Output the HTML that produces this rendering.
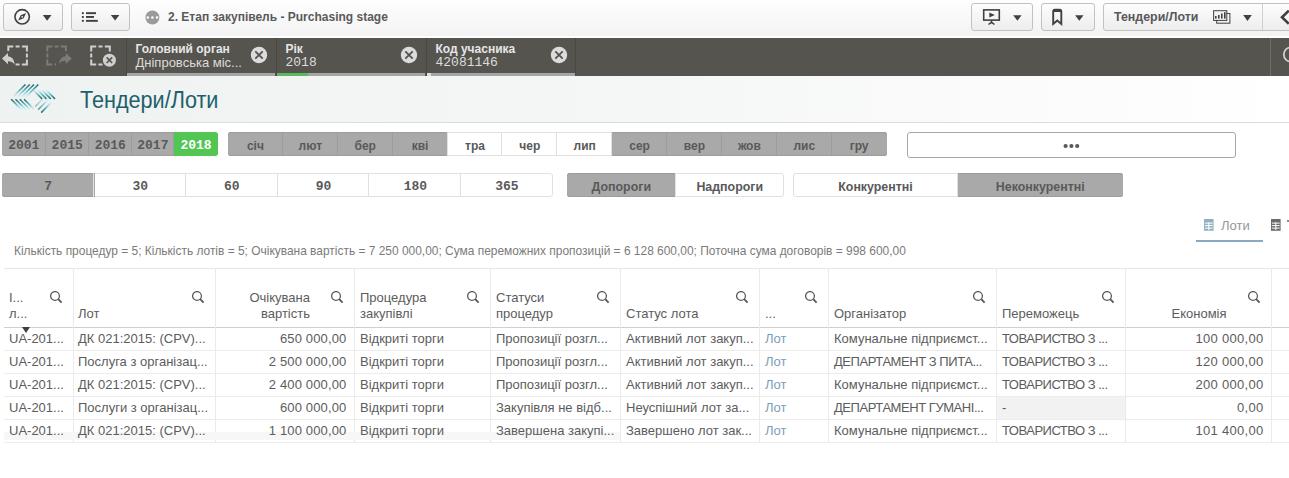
<!DOCTYPE html>
<html><head><meta charset="utf-8">
<style>
*{margin:0;padding:0;box-sizing:border-box}
html,body{width:1289px;height:478px;overflow:hidden;background:#fff;font-family:"Liberation Sans",sans-serif;position:relative}
.a{position:absolute}
.btn{position:absolute;top:3px;height:28px;border:1px solid #c2c2c2;border-radius:3px;background:linear-gradient(#fdfdfd,#ededed)}
#topbar{position:absolute;left:0;top:0;width:1289px;height:38px;background:linear-gradient(#fefefe,#f3f3f3 96%,#fff 96%)}
#selbar{position:absolute;left:0;top:38px;width:1289px;height:38px;background:#56544f}
.tab{position:absolute;top:0;height:38px;border-left:1px solid #4a4744}
.tab .t1{position:absolute;left:8.5px;top:4px;font-weight:bold;font-size:12px;color:#e6e6e6;white-space:nowrap}
.tab .t2{position:absolute;left:8.5px;top:17px;font-size:13px;color:#dcdcdc;white-space:nowrap}
.tab .bar{position:absolute;left:0;bottom:0;height:3px;background:#a5a5a5}
.xc{position:absolute;top:8px}
#head{position:absolute;left:0;top:76px;width:1289px;height:47px;background:linear-gradient(90deg,#eef2f0,#f5f7f6 50%,#fcfcfc 85%,#fff);border-bottom:1px solid #dcdcdc}
.c{position:absolute;display:flex;align-items:center;justify-content:center;font-weight:bold;color:#595959;white-space:nowrap}
.tx{position:absolute;font-size:13px;color:#5c5c5c;white-space:nowrap;line-height:16px}
.mono{font-family:"Liberation Mono",monospace}
</style></head><body>
<div id="topbar">
<div class="btn" style="left:3px;width:60px"></div>
<div class="btn" style="left:71px;width:59px"></div>
<div class="btn" style="left:971px;width:62px"></div>
<div class="btn" style="left:1041px;width:54px"></div>
<div class="btn" style="left:1103px;width:200px"></div>
<div class="a" style="left:1262px;top:4px;width:1px;height:26px;background:#cfcfcf"></div>
<div class="a" style="left:168px;top:10px;font-size:12px;font-weight:bold;color:#595959;white-space:nowrap">2. Етап закупівель - Purchasing stage</div>
<div class="a" style="left:1114px;top:10px;font-size:12.4px;font-weight:bold;color:#595959;white-space:nowrap">Тендери/Лоти</div>
</div>
<div id="selbar">
<div class="tab" style="left:126px;width:150px"><div class="t1">Головний орган</div><div class="t2">Дніпровська міс...</div><div class="bar" style="width:148px"></div><svg class="xc" style="left:123px" width="18" height="18" viewBox="0 0 18 18"><circle cx="9" cy="9" r="8.2" fill="#dcdcdc"/><path d="M5.3 5.3 L12.7 12.7 M12.7 5.3 L5.3 12.7" stroke="#56544f" stroke-width="1.8"/></svg></div>
<div class="tab" style="left:276px;width:150px"><div class="t1">Рік</div><div class="t2 mono">2018</div><div class="bar" style="width:148px"></div><div class="bar" style="width:31px;background:#5cb85c"></div><svg class="xc" style="left:123px" width="18" height="18" viewBox="0 0 18 18"><circle cx="9" cy="9" r="8.2" fill="#dcdcdc"/><path d="M5.3 5.3 L12.7 12.7 M12.7 5.3 L5.3 12.7" stroke="#56544f" stroke-width="1.8"/></svg></div>
<div class="tab" style="left:426px;width:150px;border-right:1px solid #4a4744"><div class="t1">Код учасника</div><div class="t2 mono">42081146</div><div class="bar" style="width:148px"></div><div class="bar" style="width:4px;background:#e0e0e0"></div><svg class="xc" style="left:123px" width="18" height="18" viewBox="0 0 18 18"><circle cx="9" cy="9" r="8.2" fill="#dcdcdc"/><path d="M5.3 5.3 L12.7 12.7 M12.7 5.3 L5.3 12.7" stroke="#56544f" stroke-width="1.8"/></svg></div>
<div class="a" style="left:1270px;top:0;width:1px;height:38px;background:#6f6d69"></div>
<svg class="a" style="left:1271px;top:0" width="18" height="38"><circle cx="20" cy="16.5" r="7.2" fill="none" stroke="#cfcfcf" stroke-width="1.8"/></svg>
</div>
<svg class="a" style="left:0;top:0" width="170" height="38" viewBox="0 0 170 38"><circle cx="22.15" cy="16.8" r="7.2" fill="none" stroke="#404040" stroke-width="1.6"/><path d="M26.1 13.1 L23.6 18.2 L18.2 20.4 L20.7 15.3 Z" fill="#404040"/><circle cx="22.2" cy="16.8" r="0.9" fill="#f4f4f4"/><path d="M42.8 14.9 L51.5 14.9 L47.15 20.7 Z" fill="#404040"/><rect x="81.9" y="12.2" width="1.9" height="1.9" fill="#404040"/><rect x="81.9" y="16" width="1.9" height="1.9" fill="#404040"/><rect x="81.9" y="19.9" width="1.9" height="1.9" fill="#404040"/><rect x="86" y="12.2" width="10" height="1.9" fill="#404040"/><rect x="86" y="16" width="8" height="1.9" fill="#404040"/><rect x="86" y="19.9" width="11.8" height="1.9" fill="#404040"/><path d="M110.8 14.9 L119.4 14.9 L115.1 20.5 Z" fill="#404040"/><circle cx="152.4" cy="17.5" r="7" fill="#9b9b9b"/><circle cx="147.8" cy="17.4" r="1.25" fill="#fff"/><circle cx="152.4" cy="17.4" r="1.25" fill="#fff"/><circle cx="157" cy="17.4" r="1.25" fill="#fff"/></svg>
<svg class="a" style="left:960px;top:0" width="329" height="38" viewBox="960 0 329 38"><rect x="983.7" y="9.9" width="15.6" height="10.2" fill="none" stroke="#404040" stroke-width="1.6"/><path d="M989.3 12.6 L994.8 15 L989.3 17.4 Z" fill="#404040"/><path d="M991.5 20.5 V22.5 M988.5 24.5 L991.5 22.3 L994.5 24.5" fill="none" stroke="#404040" stroke-width="1.5"/><path d="M1013.2 15.2 L1021.6 15.2 L1017.4 20.8 Z" fill="#404040"/><path d="M1053.2 23.9 V11.5 Q1053.2 9.6 1055 9.6 H1059.5 Q1061.3 9.6 1061.3 11.5 V23.9 L1057.25 20.5 Z" fill="none" stroke="#404040" stroke-width="1.9" stroke-linejoin="miter"/><rect x="1053" y="9.4" width="8.5" height="2.6" rx="1" fill="#404040"/><path d="M1075.1 15.2 L1083.5 15.2 L1079.3 20.8 Z" fill="#404040"/><rect x="1216.7" y="13.5" width="13.2" height="9.7" fill="none" stroke="#404040" stroke-width="1"/><rect x="1213.6" y="10.7" width="13.2" height="9.7" fill="#f2f2f2" stroke="#404040" stroke-width="1"/><rect x="1215" y="16" width="1.6" height="2.6" fill="#404040"/><rect x="1218" y="15" width="1.6" height="3.6" fill="#404040"/><rect x="1221" y="13.5" width="1.6" height="5.1" fill="#404040"/><rect x="1224" y="12.2" width="1.6" height="6.4" fill="#404040"/><path d="M1243.2 15 L1251.8 15 L1247.5 20.9 Z" fill="#404040"/><path d="M1288.8 10.6 L1282 17.2 L1288.8 23.8" fill="none" stroke="#404040" stroke-width="2.6"/></svg>
<svg class="a" style="left:0;top:0" width="126" height="75" viewBox="0 0 126 75"><path d="M8.3 51.6 V46.6 H13.3 M21.9 46.6 H26.9 V51.6 M26.9 59.6 V64.6 H21.9 M13.3 64.6 H8.3 V59.6 M15.6 46.6 H19.6 M26.9 53.6 V57.6 M15.6 64.6 H19.6 M8.3 53.6 V57.6" fill="none" stroke="#cfcfcf" stroke-width="2"/><path d="M47.3 51.6 V46.6 H52.3 M60.9 46.6 H65.9 V51.6 M65.9 59.6 V64.6 H60.9 M52.3 64.6 H47.3 V59.6 M54.6 46.6 H58.6 M65.9 53.6 V57.6 M54.6 64.6 H58.6 M47.3 53.6 V57.6" fill="none" stroke="#7d7b78" stroke-width="2"/><path d="M91.2 51.6 V46.6 H96.2 M104.8 46.6 H109.8 V51.6 M109.8 59.6 V64.6 H104.8 M96.2 64.6 H91.2 V59.6 M98.5 46.6 H102.5 M109.8 53.6 V57.6 M98.5 64.6 H102.5 M91.2 53.6 V57.6" fill="none" stroke="#cfcfcf" stroke-width="2"/><rect x="6" y="51" width="9" height="15" fill="#575451"/><path d="M2 58.6 L8 53 V56.3 Q13.8 56.6 14.8 64.8 Q12.5 61 8 61.2 V64.3 Z" fill="#cfcfcf"/><rect x="56" y="51" width="14" height="15" fill="#575451"/><path d="M71.8 58.4 L65.8 53 V56.2 Q60 56.5 59 63.7 Q61.3 60.3 65.8 60.7 V63.8 Z" fill="#7d7b78"/><circle cx="109.4" cy="60.2" r="7.7" fill="#575451"/><circle cx="109.4" cy="60.2" r="6.5" fill="#cfcfcf"/><path d="M106.6 57.4 L112.2 63 M112.2 57.4 L106.6 63" stroke="#575451" stroke-width="1.6"/></svg>
<div id="head"><svg class="a" style="left:0;top:0" width="70" height="47" viewBox="0 76 70 47"><defs><linearGradient id="gUL" x1="1" y1="0" x2="0" y2="1"><stop offset="0" stop-color="#1f636d"/><stop offset="0.55" stop-color="#6fc3d0"/><stop offset="1" stop-color="#bfeaf0" stop-opacity="0.3"/></linearGradient><linearGradient id="gLL" x1="0" y1="0" x2="1" y2="1"><stop offset="0" stop-color="#1f636d"/><stop offset="0.55" stop-color="#6fc3d0"/><stop offset="1" stop-color="#bfeaf0" stop-opacity="0.3"/></linearGradient><linearGradient id="gUR" x1="1" y1="1" x2="0" y2="0"><stop offset="0" stop-color="#1f636d"/><stop offset="0.55" stop-color="#6fc3d0"/><stop offset="1" stop-color="#bfeaf0" stop-opacity="0.3"/></linearGradient><linearGradient id="gLR" x1="0" y1="1" x2="1" y2="0"><stop offset="0" stop-color="#1f636d"/><stop offset="0.55" stop-color="#6fc3d0"/><stop offset="1" stop-color="#bfeaf0" stop-opacity="0.3"/></linearGradient></defs><path d="M25.4 84.5 L12.8 97.1" stroke="url(#gUL)" stroke-width="1.5" fill="none"/><path d="M11.2 99.3 L21.5 109.6" stroke="url(#gLL)" stroke-width="1.5" fill="none"/><path d="M55.0 98.9 L46.0 89.9" stroke="url(#gUR)" stroke-width="1.5" fill="none"/><path d="M29.7 84.5 L17.1 97.1" stroke="url(#gUL)" stroke-width="1.5" fill="none"/><path d="M15.5 99.3 L25.8 109.6" stroke="url(#gLL)" stroke-width="1.5" fill="none"/><path d="M50.7 98.9 L41.7 89.9" stroke="url(#gUR)" stroke-width="1.5" fill="none"/><path d="M34.0 84.5 L21.4 97.1" stroke="url(#gUL)" stroke-width="1.5" fill="none"/><path d="M19.8 99.3 L30.1 109.6" stroke="url(#gLL)" stroke-width="1.5" fill="none"/><path d="M46.4 98.9 L37.4 89.9" stroke="url(#gUR)" stroke-width="1.5" fill="none"/><path d="M38.3 84.5 L25.7 97.1" stroke="url(#gUL)" stroke-width="1.5" fill="none"/><path d="M24.1 99.3 L34.4 109.6" stroke="url(#gLL)" stroke-width="1.5" fill="none"/><path d="M42.1 98.9 L33.1 89.9" stroke="url(#gUR)" stroke-width="1.5" fill="none"/><path d="M41.2 112.6 L51.5 102.3" stroke="url(#gLR)" stroke-width="1.5" fill="none" opacity="1.00"/><path d="M38.2 109.6 L48.5 99.3" stroke="url(#gLR)" stroke-width="1.5" fill="none" opacity="0.70"/><path d="M35.2 106.6 L45.5 96.3" stroke="url(#gLR)" stroke-width="1.5" fill="none" opacity="0.40"/></svg><div class="a" style="left:80px;top:10.5px;font-size:23px;color:#20606c;white-space:nowrap;transform:scaleX(0.94);transform-origin:0 0">Тендери/Лоти</div></div>
<div class="a" style="left:2px;top:132px;width:216.0px;height:24px;border:1px solid #e1e1e1;border-radius:3px;background:#fff"></div>
<div class="c" style="left:2.00px;top:132px;width:43.60px;height:24px;background:#a9a9a9;box-shadow:inset 0 1px #9c9c9c,inset 0 -1px #9c9c9c;border-radius:3px 0px 0px 3px;font-size:13px;color:#595959;font-family:'Liberation Mono',monospace;padding-top:2px">2001</div>
<div class="c" style="left:45.60px;top:132px;width:43.20px;height:24px;background:#a9a9a9;box-shadow:inset 0 1px #9c9c9c,inset 0 -1px #9c9c9c;border-radius:0px 0px 0px 0px;font-size:13px;color:#595959;font-family:'Liberation Mono',monospace;padding-top:2px">2015</div>
<div class="c" style="left:88.80px;top:132px;width:42.90px;height:24px;background:#a9a9a9;box-shadow:inset 0 1px #9c9c9c,inset 0 -1px #9c9c9c;border-radius:0px 0px 0px 0px;font-size:13px;color:#595959;font-family:'Liberation Mono',monospace;padding-top:2px">2016</div>
<div class="c" style="left:131.70px;top:132px;width:42.40px;height:24px;background:#a9a9a9;box-shadow:inset 0 1px #9c9c9c,inset 0 -1px #9c9c9c;border-radius:0px 0px 0px 0px;font-size:13px;color:#595959;font-family:'Liberation Mono',monospace;padding-top:2px">2017</div>
<div class="c" style="left:174.10px;top:132px;width:43.90px;height:24px;background:#52c552;border-radius:0px 3px 3px 0px;font-size:13px;color:#fff;font-family:'Liberation Mono',monospace;padding-top:2px">2018</div>
<div class="a" style="left:45px;top:132px;width:1px;height:24px;background:#9c9c9c"></div>
<div class="a" style="left:88px;top:132px;width:1px;height:24px;background:#9c9c9c"></div>
<div class="a" style="left:131px;top:132px;width:1px;height:24px;background:#9c9c9c"></div>
<div class="a" style="left:173px;top:132px;width:1px;height:24px;background:#9c9c9c"></div>
<div class="a" style="left:228px;top:132px;width:658.5600000000001px;height:24px;border:1px solid #e1e1e1;border-radius:3px;background:#fff"></div>
<div class="c" style="left:228.00px;top:132px;width:54.88px;height:24px;background:#a9a9a9;box-shadow:inset 0 1px #9c9c9c,inset 0 -1px #9c9c9c;border-radius:3px 0px 0px 3px;font-size:12px;color:#595959;padding-top:3px">січ</div>
<div class="c" style="left:282.88px;top:132px;width:54.88px;height:24px;background:#a9a9a9;box-shadow:inset 0 1px #9c9c9c,inset 0 -1px #9c9c9c;border-radius:0px 0px 0px 0px;font-size:12px;color:#595959;padding-top:3px">лют</div>
<div class="c" style="left:337.76px;top:132px;width:54.88px;height:24px;background:#a9a9a9;box-shadow:inset 0 1px #9c9c9c,inset 0 -1px #9c9c9c;border-radius:0px 0px 0px 0px;font-size:12px;color:#595959;padding-top:3px">бер</div>
<div class="c" style="left:392.64px;top:132px;width:54.88px;height:24px;background:#a9a9a9;box-shadow:inset 0 1px #9c9c9c,inset 0 -1px #9c9c9c;border-radius:0px 0px 0px 0px;font-size:12px;color:#595959;padding-top:3px">кві</div>
<div class="c" style="left:447.52px;top:132px;width:54.88px;height:24px;border-radius:0px 0px 0px 0px;font-size:12px;color:#595959;padding-top:3px">тра</div>
<div class="c" style="left:502.40px;top:132px;width:54.88px;height:24px;border-radius:0px 0px 0px 0px;font-size:12px;color:#595959;padding-top:3px">чер</div>
<div class="c" style="left:557.28px;top:132px;width:54.88px;height:24px;border-radius:0px 0px 0px 0px;font-size:12px;color:#595959;padding-top:3px">лип</div>
<div class="c" style="left:612.16px;top:132px;width:54.88px;height:24px;background:#a9a9a9;box-shadow:inset 0 1px #9c9c9c,inset 0 -1px #9c9c9c;border-radius:0px 0px 0px 0px;font-size:12px;color:#595959;padding-top:3px">сер</div>
<div class="c" style="left:667.04px;top:132px;width:54.88px;height:24px;background:#a9a9a9;box-shadow:inset 0 1px #9c9c9c,inset 0 -1px #9c9c9c;border-radius:0px 0px 0px 0px;font-size:12px;color:#595959;padding-top:3px">вер</div>
<div class="c" style="left:721.92px;top:132px;width:54.88px;height:24px;background:#a9a9a9;box-shadow:inset 0 1px #9c9c9c,inset 0 -1px #9c9c9c;border-radius:0px 0px 0px 0px;font-size:12px;color:#595959;padding-top:3px">жов</div>
<div class="c" style="left:776.80px;top:132px;width:54.88px;height:24px;background:#a9a9a9;box-shadow:inset 0 1px #9c9c9c,inset 0 -1px #9c9c9c;border-radius:0px 0px 0px 0px;font-size:12px;color:#595959;padding-top:3px">лис</div>
<div class="c" style="left:831.68px;top:132px;width:54.88px;height:24px;background:#a9a9a9;box-shadow:inset 0 1px #9c9c9c,inset 0 -1px #9c9c9c;border-radius:0px 3px 3px 0px;font-size:12px;color:#595959;padding-top:3px">гру</div>
<div class="a" style="left:282px;top:132px;width:1px;height:24px;background:#9c9c9c"></div>
<div class="a" style="left:337px;top:132px;width:1px;height:24px;background:#9c9c9c"></div>
<div class="a" style="left:392px;top:132px;width:1px;height:24px;background:#9c9c9c"></div>
<div class="a" style="left:447px;top:132px;width:1px;height:24px;background:#e1e1e1"></div>
<div class="a" style="left:501px;top:132px;width:1px;height:24px;background:#e1e1e1"></div>
<div class="a" style="left:556px;top:132px;width:1px;height:24px;background:#e1e1e1"></div>
<div class="a" style="left:611px;top:132px;width:1px;height:24px;background:#e1e1e1"></div>
<div class="a" style="left:666px;top:132px;width:1px;height:24px;background:#9c9c9c"></div>
<div class="a" style="left:721px;top:132px;width:1px;height:24px;background:#9c9c9c"></div>
<div class="a" style="left:776px;top:132px;width:1px;height:24px;background:#9c9c9c"></div>
<div class="a" style="left:831px;top:132px;width:1px;height:24px;background:#9c9c9c"></div>
<div class="a" style="left:907px;top:132px;width:329px;height:26px;border:1px solid #a8a8a8;border-radius:3px;background:#fff"></div>
<svg class="a" style="left:1060px;top:141px" width="24" height="10"><circle cx="5.6" cy="5" r="2.1" fill="#595959"/><circle cx="11.4" cy="5" r="2.1" fill="#595959"/><circle cx="17.2" cy="5" r="2.1" fill="#595959"/></svg>
<div class="a" style="left:2px;top:173px;width:550.5px;height:24px;border:1px solid #e1e1e1;border-radius:3px;background:#fff"></div>
<div class="c" style="left:2.00px;top:173px;width:92.50px;height:24px;background:#a9a9a9;box-shadow:inset 0 1px #9c9c9c,inset 0 -1px #9c9c9c;border-radius:3px 0px 0px 3px;font-size:13px;color:#595959;font-family:'Liberation Mono',monospace;padding-top:2px">7</div>
<div class="c" style="left:94.50px;top:173px;width:91.60px;height:24px;border-radius:0px 0px 0px 0px;font-size:13px;color:#595959;font-family:'Liberation Mono',monospace;padding-top:2px">30</div>
<div class="c" style="left:186.10px;top:173px;width:91.50px;height:24px;border-radius:0px 0px 0px 0px;font-size:13px;color:#595959;font-family:'Liberation Mono',monospace;padding-top:2px">60</div>
<div class="c" style="left:277.60px;top:173px;width:91.80px;height:24px;border-radius:0px 0px 0px 0px;font-size:13px;color:#595959;font-family:'Liberation Mono',monospace;padding-top:2px">90</div>
<div class="c" style="left:369.40px;top:173px;width:91.90px;height:24px;border-radius:0px 0px 0px 0px;font-size:13px;color:#595959;font-family:'Liberation Mono',monospace;padding-top:2px">180</div>
<div class="c" style="left:461.30px;top:173px;width:91.20px;height:24px;border-radius:0px 3px 3px 0px;font-size:13px;color:#595959;font-family:'Liberation Mono',monospace;padding-top:2px">365</div>
<div class="a" style="left:93px;top:173px;width:1px;height:24px;background:#e1e1e1"></div>
<div class="a" style="left:185px;top:173px;width:1px;height:24px;background:#e1e1e1"></div>
<div class="a" style="left:277px;top:173px;width:1px;height:24px;background:#e1e1e1"></div>
<div class="a" style="left:368px;top:173px;width:1px;height:24px;background:#e1e1e1"></div>
<div class="a" style="left:460px;top:173px;width:1px;height:24px;background:#e1e1e1"></div>
<div class="a" style="left:567px;top:173px;width:217.0px;height:24px;border:1px solid #e1e1e1;border-radius:3px;background:#fff"></div>
<div class="c" style="left:567.00px;top:173px;width:108.50px;height:24px;background:#a9a9a9;box-shadow:inset 0 1px #9c9c9c,inset 0 -1px #9c9c9c;border-radius:3px 0px 0px 3px;font-size:12.4px;color:#595959;padding-top:3px">Допороги</div>
<div class="c" style="left:675.50px;top:173px;width:108.50px;height:24px;border-radius:0px 3px 3px 0px;font-size:12.4px;color:#595959;padding-top:3px">Надпороги</div>
<div class="a" style="left:675px;top:173px;width:1px;height:24px;background:#e1e1e1"></div>
<div class="a" style="left:793px;top:173px;width:329.5px;height:24px;border:1px solid #e1e1e1;border-radius:3px;background:#fff"></div>
<div class="c" style="left:793.00px;top:173px;width:165.00px;height:24px;border-radius:3px 0px 0px 3px;font-size:12.4px;color:#595959;padding-top:3px">Конкурентні</div>
<div class="c" style="left:958.00px;top:173px;width:164.50px;height:24px;background:#a9a9a9;box-shadow:inset 0 1px #9c9c9c,inset 0 -1px #9c9c9c;border-radius:0px 3px 3px 0px;font-size:12.4px;color:#595959;padding-top:3px">Неконкурентні</div>
<div class="a" style="left:957px;top:173px;width:1px;height:24px;background:#e1e1e1"></div>
<div class="a" style="left:14px;top:244px;font-size:11.95px;color:#7b7b7b;white-space:nowrap">Кількість процедур = 5; Кількість лотів = 5; Очікувана вартість = 7 250 000,00; Сума переможних пропозицій = 6 128 600,00; Поточна сума договорів = 998 600,00</div>
<div class="a" style="left:1196px;top:240px;width:67px;height:2px;background:#8aa9c1"></div>
<svg class="a" style="left:1203.5px;top:219px" width="10" height="12" viewBox="0 0 10 12"><rect x="0" y="0" width="9.6" height="11.8" fill="#8fb1c2"/><path d="M0.9 4.1 H8.7 M0.9 6.6 H8.7 M0.9 9.1 H8.7 M4.8 3.3 V11" stroke="#fff" stroke-width="1"/></svg>
<div class="a" style="left:1221px;top:218px;font-size:13px;color:#8f989c;white-space:nowrap">Лоти</div>
<svg class="a" style="left:1271px;top:219px" width="10" height="12" viewBox="0 0 10 12"><rect x="0" y="0" width="9.6" height="11.8" fill="#6e6a66"/><path d="M0.9 4.1 H8.7 M0.9 6.6 H8.7 M0.9 9.1 H8.7 M4.8 3.3 V11" stroke="#fff" stroke-width="1"/></svg>
<div class="a" style="left:1287px;top:220px;width:2px;height:2px;background:#8a8a8a"></div>
<div class="a" style="left:4px;top:268px;width:1285px;height:1px;background:#e6e6e6"></div>
<div class="a" style="left:4px;top:327px;width:1285px;height:1px;background:#d0d0d0"></div>
<div class="a" style="left:4px;top:350px;width:1285px;height:1px;background:#ececec"></div>
<div class="a" style="left:4px;top:373px;width:1285px;height:1px;background:#ececec"></div>
<div class="a" style="left:4px;top:396px;width:1285px;height:1px;background:#ececec"></div>
<div class="a" style="left:4px;top:419px;width:1285px;height:1px;background:#ececec"></div>
<div class="a" style="left:4px;top:442px;width:1285px;height:1px;background:#ececec"></div>
<div class="a" style="left:73px;top:268px;width:1px;height:175px;background:#ebebeb"></div>
<div class="a" style="left:215px;top:268px;width:1px;height:175px;background:#ebebeb"></div>
<div class="a" style="left:354px;top:268px;width:1px;height:175px;background:#ebebeb"></div>
<div class="a" style="left:490px;top:268px;width:1px;height:175px;background:#ebebeb"></div>
<div class="a" style="left:620px;top:268px;width:1px;height:175px;background:#ebebeb"></div>
<div class="a" style="left:759px;top:268px;width:1px;height:175px;background:#ebebeb"></div>
<div class="a" style="left:828px;top:268px;width:1px;height:175px;background:#ebebeb"></div>
<div class="a" style="left:996px;top:268px;width:1px;height:175px;background:#ebebeb"></div>
<div class="a" style="left:1125px;top:268px;width:1px;height:175px;background:#ebebeb"></div>
<div class="a" style="left:1271px;top:268px;width:1px;height:175px;background:#ebebeb"></div>
<div class="tx" style="left:9px;top:290px;">I...</div>
<div class="tx" style="left:9px;top:306px;">л...</div>
<div class="tx" style="left:78px;top:306px;">Лот</div>
<div class="tx" style="left:360px;top:290px;">Процедура</div>
<div class="tx" style="left:360px;top:306px;">закупівлі</div>
<div class="tx" style="left:496px;top:290px;">Статуси</div>
<div class="tx" style="left:496px;top:306px;">процедур</div>
<div class="tx" style="left:626px;top:306px;">Статус лота</div>
<div class="tx" style="left:765px;top:306px;">...</div>
<div class="tx" style="left:834px;top:306px;">Організатор</div>
<div class="tx" style="left:1002px;top:306px;">Переможець</div>
<div class="tx" style="left:210px;top:290px;width:100px;text-align:right">Очікувана</div>
<div class="tx" style="left:210px;top:306px;width:100px;text-align:right">вартість</div>
<div class="tx" style="left:1149px;top:306px;width:100px;text-align:center">Економія</div>
<svg class="a" style="left:50px;top:291px" width="13" height="13" viewBox="0 0 13 13"><circle cx="5" cy="5" r="4.4" fill="none" stroke="#595959" stroke-width="1.3"/><line x1="8.2" y1="8.2" x2="11.6" y2="11.6" stroke="#595959" stroke-width="1.9"/></svg>
<svg class="a" style="left:192px;top:291px" width="13" height="13" viewBox="0 0 13 13"><circle cx="5" cy="5" r="4.4" fill="none" stroke="#595959" stroke-width="1.3"/><line x1="8.2" y1="8.2" x2="11.6" y2="11.6" stroke="#595959" stroke-width="1.9"/></svg>
<svg class="a" style="left:331px;top:291px" width="13" height="13" viewBox="0 0 13 13"><circle cx="5" cy="5" r="4.4" fill="none" stroke="#595959" stroke-width="1.3"/><line x1="8.2" y1="8.2" x2="11.6" y2="11.6" stroke="#595959" stroke-width="1.9"/></svg>
<svg class="a" style="left:467px;top:291px" width="13" height="13" viewBox="0 0 13 13"><circle cx="5" cy="5" r="4.4" fill="none" stroke="#595959" stroke-width="1.3"/><line x1="8.2" y1="8.2" x2="11.6" y2="11.6" stroke="#595959" stroke-width="1.9"/></svg>
<svg class="a" style="left:597px;top:291px" width="13" height="13" viewBox="0 0 13 13"><circle cx="5" cy="5" r="4.4" fill="none" stroke="#595959" stroke-width="1.3"/><line x1="8.2" y1="8.2" x2="11.6" y2="11.6" stroke="#595959" stroke-width="1.9"/></svg>
<svg class="a" style="left:736px;top:291px" width="13" height="13" viewBox="0 0 13 13"><circle cx="5" cy="5" r="4.4" fill="none" stroke="#595959" stroke-width="1.3"/><line x1="8.2" y1="8.2" x2="11.6" y2="11.6" stroke="#595959" stroke-width="1.9"/></svg>
<svg class="a" style="left:805px;top:291px" width="13" height="13" viewBox="0 0 13 13"><circle cx="5" cy="5" r="4.4" fill="none" stroke="#595959" stroke-width="1.3"/><line x1="8.2" y1="8.2" x2="11.6" y2="11.6" stroke="#595959" stroke-width="1.9"/></svg>
<svg class="a" style="left:973px;top:291px" width="13" height="13" viewBox="0 0 13 13"><circle cx="5" cy="5" r="4.4" fill="none" stroke="#595959" stroke-width="1.3"/><line x1="8.2" y1="8.2" x2="11.6" y2="11.6" stroke="#595959" stroke-width="1.9"/></svg>
<svg class="a" style="left:1102px;top:291px" width="13" height="13" viewBox="0 0 13 13"><circle cx="5" cy="5" r="4.4" fill="none" stroke="#595959" stroke-width="1.3"/><line x1="8.2" y1="8.2" x2="11.6" y2="11.6" stroke="#595959" stroke-width="1.9"/></svg>
<svg class="a" style="left:1248px;top:291px" width="13" height="13" viewBox="0 0 13 13"><circle cx="5" cy="5" r="4.4" fill="none" stroke="#595959" stroke-width="1.3"/><line x1="8.2" y1="8.2" x2="11.6" y2="11.6" stroke="#595959" stroke-width="1.9"/></svg>
<div class="a" style="left:22px;top:327px;width:0;height:0;border-left:4px solid transparent;border-right:4px solid transparent;border-top:6px solid #404040"></div>
<div class="a" style="left:997px;top:397px;width:128px;height:22px;background:#f2f2f2"></div>
<div class="a" style="left:4px;top:432px;width:616px;height:8px;background:#f7f7f7"></div>
<div class="tx" style="left:9px;top:331px;">UA-201...</div>
<div class="tx" style="left:78px;top:331px;">ДК 021:2015: (CPV)...</div>
<div class="tx" style="left:200px;top:331px;width:146.5px;text-align:right;letter-spacing:0.15px">650 000,00</div>
<div class="tx" style="left:360px;top:331px;">Відкриті торги</div>
<div class="tx" style="left:496px;top:331px;">Пропозиції розгл...</div>
<div class="tx" style="left:626px;top:331px;">Активний лот закуп...</div>
<div class="tx" style="left:765px;top:331px;color:#7b9db9">Лот</div>
<div class="tx" style="left:834px;top:331px;">Комунальне підприємст...</div>
<div class="tx" style="left:1002px;top:331px;letter-spacing:-0.5px">ТОВАРИСТВО З ...</div>
<div class="tx" style="left:1130px;top:331px;width:133.5px;text-align:right;letter-spacing:0.3px">100 000,00</div>
<div class="tx" style="left:9px;top:354px;">UA-201...</div>
<div class="tx" style="left:78px;top:354px;">Послуга з організац...</div>
<div class="tx" style="left:200px;top:354px;width:146.5px;text-align:right;letter-spacing:0.15px">2 500 000,00</div>
<div class="tx" style="left:360px;top:354px;">Відкриті торги</div>
<div class="tx" style="left:496px;top:354px;">Пропозиції розгл...</div>
<div class="tx" style="left:626px;top:354px;">Активний лот закуп...</div>
<div class="tx" style="left:765px;top:354px;color:#7b9db9">Лот</div>
<div class="tx" style="left:834px;top:354px;letter-spacing:-0.45px">ДЕПАРТАМЕНТ З ПИТА...</div>
<div class="tx" style="left:1002px;top:354px;letter-spacing:-0.5px">ТОВАРИСТВО З ...</div>
<div class="tx" style="left:1130px;top:354px;width:133.5px;text-align:right;letter-spacing:0.3px">120 000,00</div>
<div class="tx" style="left:9px;top:377px;">UA-201...</div>
<div class="tx" style="left:78px;top:377px;">ДК 021:2015: (CPV)...</div>
<div class="tx" style="left:200px;top:377px;width:146.5px;text-align:right;letter-spacing:0.15px">2 400 000,00</div>
<div class="tx" style="left:360px;top:377px;">Відкриті торги</div>
<div class="tx" style="left:496px;top:377px;">Пропозиції розгл...</div>
<div class="tx" style="left:626px;top:377px;">Активний лот закуп...</div>
<div class="tx" style="left:765px;top:377px;color:#7b9db9">Лот</div>
<div class="tx" style="left:834px;top:377px;">Комунальне підприємст...</div>
<div class="tx" style="left:1002px;top:377px;letter-spacing:-0.5px">ТОВАРИСТВО З ...</div>
<div class="tx" style="left:1130px;top:377px;width:133.5px;text-align:right;letter-spacing:0.3px">200 000,00</div>
<div class="tx" style="left:9px;top:400px;">UA-201...</div>
<div class="tx" style="left:78px;top:400px;">Послуги з організац...</div>
<div class="tx" style="left:200px;top:400px;width:146.5px;text-align:right;letter-spacing:0.15px">600 000,00</div>
<div class="tx" style="left:360px;top:400px;">Відкриті торги</div>
<div class="tx" style="left:496px;top:400px;">Закупівля не відб...</div>
<div class="tx" style="left:626px;top:400px;">Неуспішний лот за...</div>
<div class="tx" style="left:765px;top:400px;color:#7b9db9">Лот</div>
<div class="tx" style="left:834px;top:400px;letter-spacing:-0.45px">ДЕПАРТАМЕНТ ГУМАНІ...</div>
<div class="tx" style="left:1002px;top:400px;">-</div>
<div class="tx" style="left:1130px;top:400px;width:133.5px;text-align:right;letter-spacing:0.3px">0,00</div>
<div class="tx" style="left:9px;top:423px;">UA-201...</div>
<div class="tx" style="left:78px;top:423px;">ДК 021:2015: (CPV)...</div>
<div class="tx" style="left:200px;top:423px;width:146.5px;text-align:right;letter-spacing:0.15px">1 100 000,00</div>
<div class="tx" style="left:360px;top:423px;">Відкриті торги</div>
<div class="tx" style="left:496px;top:423px;">Завершена закупі...</div>
<div class="tx" style="left:626px;top:423px;">Завершено лот зак...</div>
<div class="tx" style="left:765px;top:423px;color:#7b9db9">Лот</div>
<div class="tx" style="left:834px;top:423px;">Комунальне підприємст...</div>
<div class="tx" style="left:1002px;top:423px;letter-spacing:-0.5px">ТОВАРИСТВО З ...</div>
<div class="tx" style="left:1130px;top:423px;width:133.5px;text-align:right;letter-spacing:0.3px">101 400,00</div>
</body></html>
